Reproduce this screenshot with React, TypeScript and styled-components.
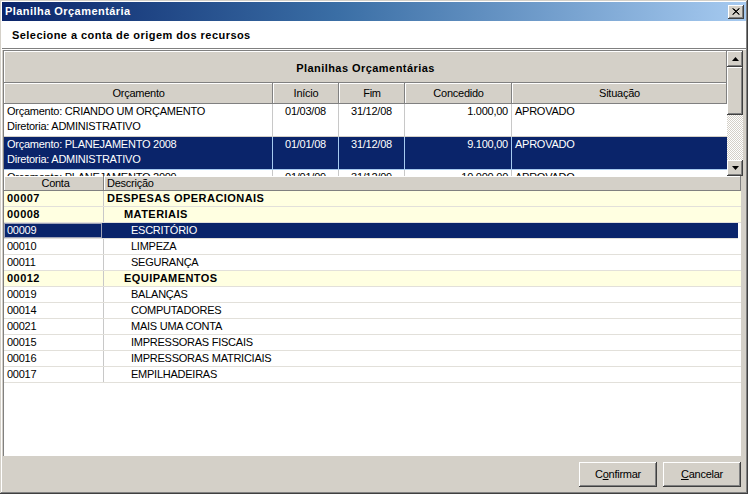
import React from 'react';
import styled, { createGlobalStyle, css } from 'styled-components';

const NAVY = '#0a246a';
const FACE = '#d4d0c8';

type Budget = {
    name: string;
    board: string;
    start: string;
    end: string;
    granted: string;
    status: string;
};

type Account = {
    code: string;
    description: string;
    level: number;
    group?: boolean;
};

const budgets: Budget[] = [
    { name: 'CRIANDO UM ORÇAMENTO', board: 'ADMINISTRATIVO', start: '01/03/08', end: '31/12/08', granted: '1.000,00', status: 'APROVADO' },
    { name: 'PLANEJAMENTO 2008', board: 'ADMINISTRATIVO', start: '01/01/08', end: '31/12/08', granted: '9.100,00', status: 'APROVADO' },
    { name: 'PLANEJAMENTO 2009', board: 'ADMINISTRATIVO', start: '01/01/09', end: '31/12/09', granted: '10.000,00', status: 'APROVADO' },
];

const accounts: Account[] = [
    { code: '00007', description: 'DESPESAS OPERACIONAIS', level: 0, group: true },
    { code: '00008', description: 'MATERIAIS', level: 1, group: true },
    { code: '00009', description: 'ESCRITÓRIO', level: 2 },
    { code: '00010', description: 'LIMPEZA', level: 2 },
    { code: '00011', description: 'SEGURANÇA', level: 2 },
    { code: '00012', description: 'EQUIPAMENTOS', level: 1, group: true },
    { code: '00019', description: 'BALANÇAS', level: 2 },
    { code: '00014', description: 'COMPUTADORES', level: 2 },
    { code: '00021', description: 'MAIS UMA CONTA', level: 2 },
    { code: '00015', description: 'IMPRESSORAS FISCAIS', level: 2 },
    { code: '00016', description: 'IMPRESSORAS MATRICIAIS', level: 2 },
    { code: '00017', description: 'EMPILHADEIRAS', level: 2 },
];

const indent = [3, 20, 27];

const App: React.FC = () => {
    const selectedBudget = 1;
    const selectedAccount = '00009';

    return (
        <>
            <GlobalStyle />
            <Window>
                <TitleBar>
                    <Title>Planilha Orçamentária</Title>
                    <CloseButton>
                        <svg width="8" height="7" viewBox="0 0 8 7">
                            <path d="M0.5 0.5 L7 6.5 M1.5 0.5 L7.5 6.5 M7 0.5 L0.5 6.5 M7.5 0.5 L1 6.5" stroke="#000" strokeWidth="1" />
                        </svg>
                    </CloseButton>
                </TitleBar>
                <Header>Selecione a conta de origem dos recursos</Header>
                <Separator />
                <Content>
                    <BudgetGrid>
                        <BudgetMain>
                            <Caption>Planilhas Orçamentárias</Caption>
                            <BudgetHeader>
                                <HeadCell>Orçamento</HeadCell>
                                <HeadCell>Início</HeadCell>
                                <HeadCell>Fim</HeadCell>
                                <HeadCell>Concedido</HeadCell>
                                <HeadCell>Situação</HeadCell>
                            </BudgetHeader>
                            <BudgetRows>
                                {budgets.map((b, i) => (
                                    <BudgetRow key={b.name} $selected={i === selectedBudget}>
                                        <BudgetCell>
                                            Orçamento: {b.name}
                                            <br />
                                            Diretoria: {b.board}
                                        </BudgetCell>
                                        <BudgetCell $align="center">{b.start}</BudgetCell>
                                        <BudgetCell $align="center">{b.end}</BudgetCell>
                                        <BudgetCell $align="right">{b.granted}</BudgetCell>
                                        <BudgetCell>{b.status}</BudgetCell>
                                    </BudgetRow>
                                ))}
                            </BudgetRows>
                        </BudgetMain>
                        <ScrollBar>
                            <ScrollButton>
                                <svg width="7" height="4" viewBox="0 0 7 4"><path d="M3.5 0 L7 4 L0 4 Z" fill="#000" /></svg>
                            </ScrollButton>
                            <ScrollThumb />
                            <ScrollTrack />
                            <ScrollButton>
                                <svg width="7" height="4" viewBox="0 0 7 4"><path d="M0 0 L7 0 L3.5 4 Z" fill="#000" /></svg>
                            </ScrollButton>
                        </ScrollBar>
                    </BudgetGrid>
                    <AccountGrid>
                        <AccountHeader>
                            <AccountHeadCell $align="center">Conta</AccountHeadCell>
                            <AccountHeadCell>Descrição</AccountHeadCell>
                        </AccountHeader>
                        {accounts.map((a) => {
                            const selected = a.code === selectedAccount;
                            return (
                                <AccountRow key={a.code} $group={a.group} $selected={selected}>
                                    <CodeCell $focused={selected}>{a.code}</CodeCell>
                                    <DescCell style={{ paddingLeft: indent[a.level] }}>{a.description}</DescCell>
                                </AccountRow>
                            );
                        })}
                    </AccountGrid>
                </Content>
                <ButtonBar>
                    <Button>C<u>o</u>nfirmar</Button>
                    <Button><u>C</u>ancelar</Button>
                </ButtonBar>
            </Window>
        </>
    );
};

const GlobalStyle = createGlobalStyle`
    html, body {
        margin: 0;
        padding: 0;
        background: ${FACE};
    }
    body {
        font-family: "Liberation Sans", "DejaVu Sans", sans-serif;
        font-size: 11px;
        letter-spacing: -0.25px;
        color: #000;
    }
    * {
        box-sizing: border-box;
    }
`;

const boldText = css`
    font-weight: bold;
    letter-spacing: 0.45px;
`;

const raised = css`
    background: ${FACE};
    box-shadow: inset -1px -1px #404040, inset 1px 1px #fff, inset -2px -2px #808080, inset 2px 2px ${FACE};
`;

const Window = styled.div`
    width: 748px;
    height: 494px;
    display: flex;
    flex-direction: column;
    padding: 2px 2px 3px 2px;
    background: ${FACE};
    box-shadow: inset -1px -1px #404040, inset 1px 1px ${FACE}, inset -2px -2px #808080, inset 2px 2px #fff;
`;

const TitleBar = styled.div`
    height: 19px;
    flex-shrink: 0;
    display: flex;
    align-items: center;
    justify-content: space-between;
    padding: 0 2px 0 3px;
    background: linear-gradient(90deg, ${NAVY} 0%, #3a6ea5 45%, #a6caf0 100%);
`;

const Title = styled.span`
    ${boldText};
    color: #fff;
    line-height: 15px;
`;

const CloseButton = styled.div`
    ${raised};
    width: 16px;
    height: 14px;
    display: flex;
    align-items: center;
    justify-content: center;
    padding-bottom: 1px;
`;

const Header = styled.div`
    ${boldText};
    height: 27px;
    flex-shrink: 0;
    display: flex;
    align-items: center;
    padding: 1px 0 0 10px;
    background: #fff;
`;

const Separator = styled.div`
    height: 2px;
    flex-shrink: 0;
    border-top: 1px solid #808080;
    border-bottom: 1px solid #fff;
`;

const Content = styled.div`
    flex: 1;
    display: flex;
    flex-direction: column;
    padding: 0 3px 0 1px;
    min-height: 0;
`;

const BudgetGrid = styled.div`
    height: 126px;
    flex-shrink: 0;
    display: flex;
    border-top: 1px solid #808080;
    border-left: 1px solid #808080;
    background: #fff;
`;

const BudgetMain = styled.div`
    flex: 1;
    display: flex;
    flex-direction: column;
    min-width: 0;
`;

const Caption = styled.div`
    ${boldText};
    background: ${FACE};
    box-shadow: inset -1px -1px #808080, inset 1px 1px #fff;
    height: 32px;
    flex-shrink: 0;
    display: flex;
    align-items: center;
    justify-content: center;
    padding-top: 1px;
`;

const columns = '269px 66px 66px 107px 1fr';

const BudgetHeader = styled.div`
    display: grid;
    grid-template-columns: ${columns};
    height: 21px;
    flex-shrink: 0;
`;

const HeadCell = styled.div`
    background: ${FACE};
    box-shadow: inset -1px -1px #808080, inset 1px 1px #fff;
    display: flex;
    align-items: center;
    justify-content: center;
    padding-bottom: 1px;
`;

const BudgetRows = styled.div`
    flex: 1;
    min-height: 0;
    overflow: hidden;
`;

const BudgetRow = styled.div<{ $selected?: boolean }>`
    display: grid;
    grid-template-columns: ${columns};
    height: 33px;
    border-bottom: 1px solid ${(p) => (p.$selected ? '#a6caf0' : '#d4d0c8')};
    background: ${(p) => (p.$selected ? NAVY : '#fff')};
    color: ${(p) => (p.$selected ? '#fff' : '#000')};
    --line: ${(p) => (p.$selected ? '#a6caf0' : '#c8c8c8')};
`;

const BudgetCell = styled.div<{ $align?: 'left' | 'center' | 'right' }>`
    text-align: ${(p) => p.$align || 'left'};
    line-height: 15px;
    padding: 0 3px;
    border-right: 1px solid var(--line);
    white-space: nowrap;
    overflow: hidden;

    &:last-child {
        border-right: none;
    }
`;

const ScrollBar = styled.div`
    width: 16px;
    flex-shrink: 0;
    display: flex;
    flex-direction: column;
`;

const ScrollButton = styled.div`
    ${raised};
    height: 16px;
    flex-shrink: 0;
    display: flex;
    align-items: center;
    justify-content: center;
`;

const ScrollThumb = styled.div`
    ${raised};
    height: 48px;
    flex-shrink: 0;
`;

const ScrollTrack = styled.div`
    flex: 1;
    background: repeating-conic-gradient(#fff 0 25%, ${FACE} 0 50%) 0 0 / 2px 2px;
`;

const AccountGrid = styled.div`
    flex: 1;
    min-height: 0;
    overflow: hidden;
    background: #fff;
    border-left: 1px solid #808080;
    border-right: 2px solid ${FACE};
`;

const AccountHeader = styled.div`
    display: grid;
    grid-template-columns: 100px 1fr;
    height: 15px;
`;

const AccountHeadCell = styled.div<{ $align?: 'left' | 'center' }>`
    background: ${FACE};
    box-shadow: inset -1px -1px #808080, inset 1px 1px #fff;
    line-height: 14px;
    padding-left: 3px;
    text-align: ${(p) => p.$align || 'left'};
`;

const AccountRow = styled.div<{ $group?: boolean; $selected?: boolean }>`
    display: grid;
    grid-template-columns: 100px 1fr;
    height: 16px;
    line-height: 15px;
    border-bottom: 1px solid #e2e0da;
    background: ${(p) => (p.$selected ? NAVY : p.$group ? '#ffffe1' : '#fff')};
    color: ${(p) => (p.$selected ? '#fff' : '#000')};
    margin-right: ${(p) => (p.$selected ? '3px' : '0')};
    ${(p) => p.$group && boldText};
`;

const CodeCell = styled.div<{ $focused?: boolean }>`
    padding-left: 3px;
    border-right: 1px solid #c8c8c8;
    ${(p) =>
        p.$focused &&
        css`
            box-shadow: inset 0 0 0 1px #a0a4b8;
            margin-right: 2px;
            border-right: none;
        `}
`;

const DescCell = styled.div`
    white-space: nowrap;
`;

const ButtonBar = styled.div`
    height: 35px;
    flex-shrink: 0;
    display: flex;
    justify-content: flex-end;
    align-items: flex-start;
    gap: 6px;
    padding: 6px 5px 0 0;
`;

const Button = styled.div`
    ${raised};
    width: 78px;
    height: 25px;
    display: flex;
    align-items: center;
    justify-content: center;
    padding-bottom: 1px;
`;

export default App;
